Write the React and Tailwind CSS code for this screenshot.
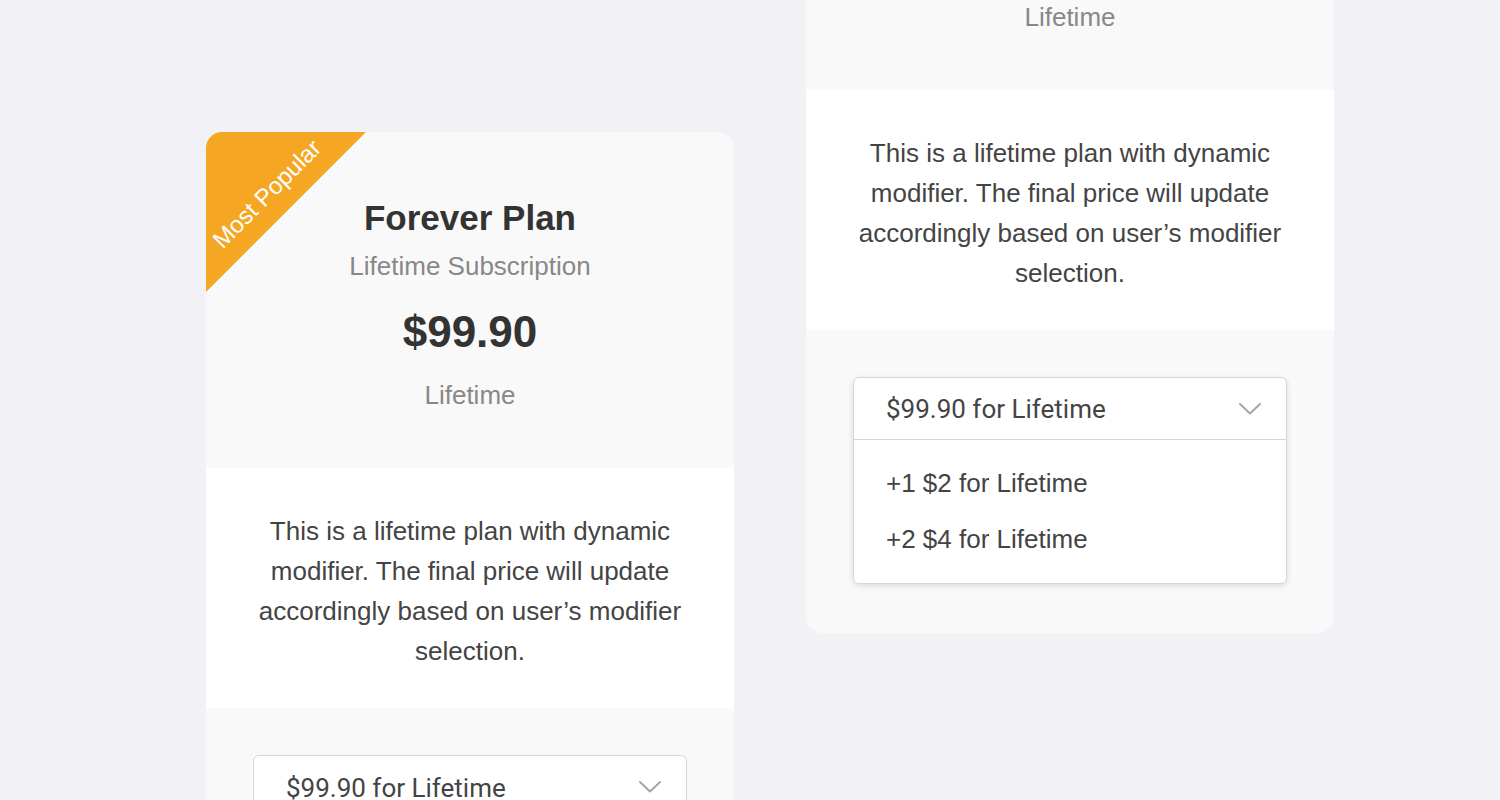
const sans = { fontFamily: '"Liberation Sans", Arial, sans-serif' }

function Chevron() {
  return (
    <svg width="24" height="14" viewBox="0 0 24 14" fill="none" className="shrink-0">
      <polyline points="2,2 12,11.5 22,2" stroke="#a6a6a6" strokeWidth="2" strokeLinecap="round" strokeLinejoin="round" />
    </svg>
  )
}

function SelectBox({ open }) {
  return (
    <div className={`rounded-md border border-[#d6d6d6] bg-white ${open ? 'shadow-[0_2px_6px_rgba(0,0,0,0.12)]' : ''}`}>
      <div className={`flex h-[62px] items-center justify-between pl-[32px] pr-[24px] ${open ? 'border-b border-[#d6d6d6]' : ''}`}>
        <span className="pt-[2px] text-[26px] text-[#444]" style={{ fontFamily: 'Roboto, "Liberation Sans", sans-serif' }}>
          $99.90 for Lifetime
        </span>
        <Chevron />
      </div>
      {open && (
        <ul className="pb-[16px] pt-[15px]" style={sans}>
          <li className="flex h-[56px] items-center pl-[32px] text-[26px] text-[#444]">+1 $2 for Lifetime</li>
          <li className="flex h-[56px] items-center pl-[32px] text-[26px] text-[#444]">+2 $4 for Lifetime</li>
        </ul>
      )}
    </div>
  )
}

function PlanCard({ popular, open, className }) {
  return (
    <div className={`relative w-[528px] shrink-0 overflow-hidden rounded-2xl bg-[#f9f9f9] ${className}`} style={sans}>
      {popular && (
        <div className="absolute left-0 top-0 h-[160px] w-[160px]">
          <div className="absolute inset-0 bg-[#f5a623] [clip-path:polygon(0_0,100%_0,0_100%)]" />
          <span className="absolute left-[61px] top-[62px] -translate-x-1/2 -translate-y-1/2 -rotate-45 whitespace-nowrap text-[24px] leading-none text-white">
            Most Popular
          </span>
        </div>
      )}

      {/* Header */}
      <div className="flex flex-col items-center pb-[57px] pt-[64px] text-center">
        <h2 className="text-[35px] font-bold leading-[44px] text-[#333]">Forever Plan</h2>
        <p className="mt-[10px] text-[26px] leading-[32px] text-[#888]">Lifetime Subscription</p>
        <p className="mt-[26px] text-[44px] font-bold leading-[48px] text-[#333]">$99.90</p>
        <p className="mt-[23px] text-[26px] leading-[32px] text-[#888]">Lifetime</p>
      </div>

      {/* Description */}
      <div className="bg-white px-[42px] pb-[37px] pt-[43px] text-center text-[26px] leading-[40px] text-[#444]">
        This is a lifetime plan with dynamic modifier. The final price will update accordingly based on user’s modifier selection.
      </div>

      {/* Modifier */}
      <div className="px-[47px] pb-[49px] pt-[47px]">
        <SelectBox open={open} />
      </div>
    </div>
  )
}

export default function App() {
  return (
    <div className="h-[800px] overflow-hidden bg-[#f1f1f6]">
      <div className="flex items-start gap-[72px] pl-[206px]">
        <PlanCard popular className="mt-[132px]" />
        <PlanCard open className="mt-[-246px]" />
      </div>
    </div>
  )
}
